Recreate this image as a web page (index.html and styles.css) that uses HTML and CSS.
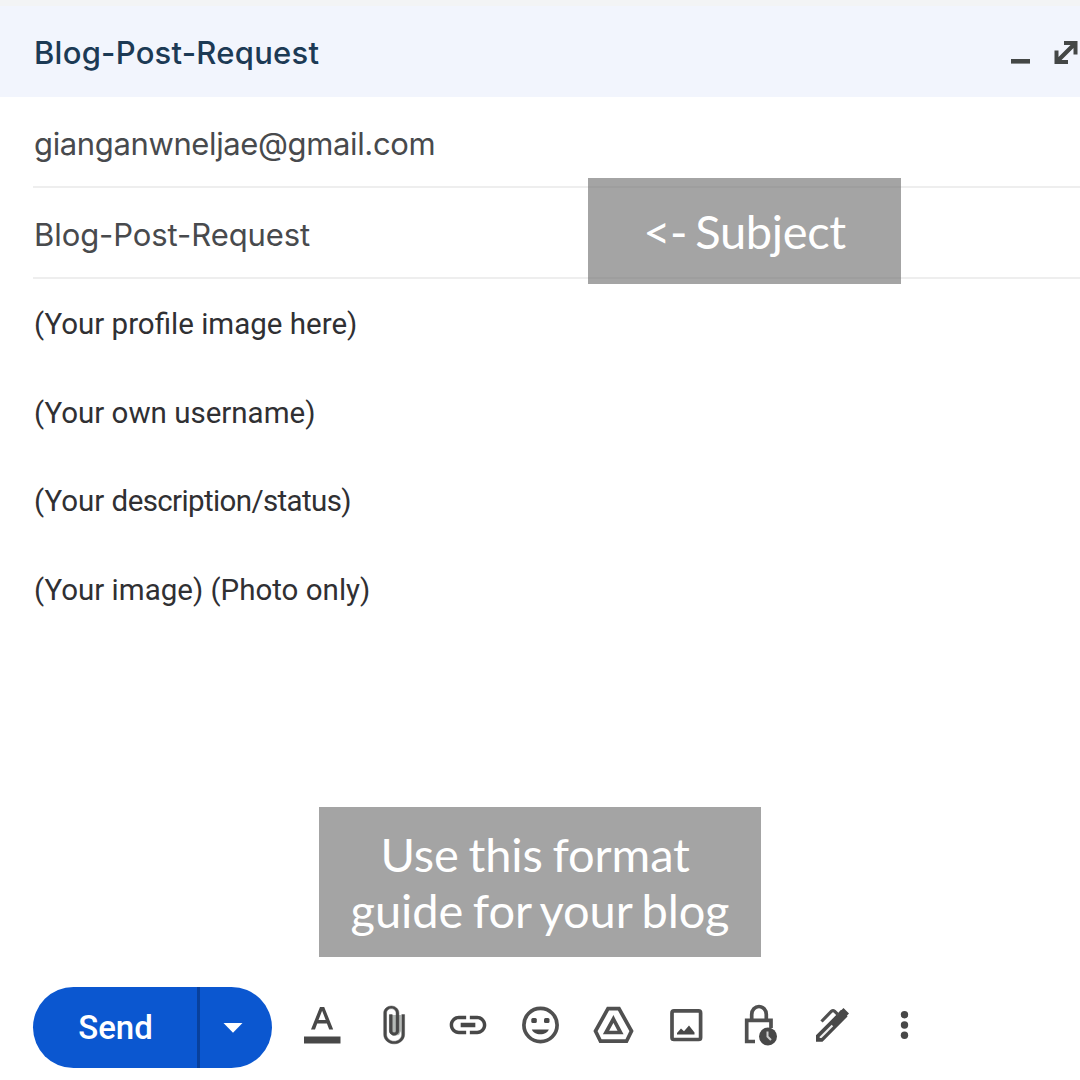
FILE: index.html
```
<!DOCTYPE html>
<html lang="en">
<head>
<meta charset="utf-8">
<title>Blog-Post-Request</title>
<link rel="stylesheet" href="styles.css">
</head>
<body>
<main class="compose">
  <header class="titlebar">
    <h1 class="title">Blog-Post-Request</h1>
    <svg class="window-icons" viewBox="0 0 80 44" width="80" height="44">
      <path d="M11 31h19v4.600H11z"/>
      <path d="M64 13h13.500v13.500h-4v-6.500L61.500 32H68v4H54.500V22.500h4v6.500L70.500 17H64z"/>
    </svg>
  </header>
  <div class="field recipient">gianganwneljae@gmail.com</div>
  <div class="field">Blog-Post-Request</div>
  <section class="message">
    <p>(Your profile image here)</p>
    <p>(Your own username)</p>
    <p>(Your <span class="tight">description/status)</span></p>
    <p>(Your image) (Photo only)</p>
  </section>
  <footer class="toolbar">
    <div class="send">
      <button class="send-main">Send</button>
      <button class="send-more" aria-label="More send options"><svg viewBox="0 0 20 10" width="20" height="10"><path d="M.5 0h19L10 9.700z"/></svg></button>
    </div>
    <div class="tools">
      <svg viewBox="0 0 44 44"><path d="M4 33.500h36.500v7H4z"/><path d="M11 26.500L20 4h4.200l9 22.500h-4l-2.300-6H17.200l-2.200 6zM18.500 17h7.200L22.100 7.800z"/></svg>
      <svg viewBox="0 0 44 44"><path class="tint" d="M16 12V29l4 4 6-1 2-4V12z"/><g transform="translate(-2.600 1.300) scale(1.900 1.720)"><path d="M16.500 6v11.500c0 2.210-1.790 4-4 4s-4-1.790-4-4V5c0-1.380 1.120-2.500 2.500-2.500s2.500 1.120 2.500 2.500v10.500c0 .55-.45 1-1 1s-1-.45-1-1V6H10v9.500c0 1.380 1.120 2.500 2.500 2.500s2.500-1.120 2.500-2.500V5c0-2.210-1.790-4-4-4S7 2.790 7 5v12.500c0 3.040 2.460 5.500 5.500 5.500s5.500-2.460 5.500-5.500V6z" stroke="#484848" stroke-width=".25"/></g></svg>
      <svg viewBox="0 0 24 24"><path d="M3.900 12c0-1.710 1.390-3.100 3.100-3.100h4V7H7c-2.760 0-5 2.240-5 5s2.240 5 5 5h4v-1.900H7c-1.710 0-3.100-1.390-3.100-3.100zM8 13.200h8v-2.400H8zM17 7h-4v1.900h4c1.710 0 3.100 1.390 3.100 3.100s-1.390 3.100-3.100 3.100h-4V17h4c2.760 0 5-2.240 5-5s-2.240-5-5-5z"/></svg>
      <svg viewBox="0 0 44 44"><circle class="line" cx="22.500" cy="22" r="16.600"/><rect x="13.300" y="15" width="5.500" height="5" rx="1.500"/><rect x="26" y="15" width="5.500" height="5" rx="1.500"/><path d="M13.800 26.500h17c-1 3-4.500 4.800-8.500 4.800s-7.500-1.800-8.500-4.800z"/></svg>
      <svg viewBox="0 0 44 44"><path class="line" d="M17 5.700h11L40.500 28 35.500 38.200H9.500L4.500 28z"/><path class="line" d="M22.400 16L29.500 29.500H15z"/></svg>
      <svg viewBox="0 0 44 44"><rect class="line" x="8" y="7.900" width="28.600" height="28.600" rx="2"/><path d="M13 31.500v-1.500l4-4.500 3 2.700 5-5.700 5.500 7v2z"/></svg>
      <svg viewBox="0 0 44 44"><path class="line" d="M14.700 16.500V11.500a7.300 8 0 0 1 14.600 0v5M18 38.500H9.700V17.300H34V25"/><circle cx="31" cy="33.500" r="9"/><path class="hand" d="M30.500 28.500v5l3.500 3.500"/></svg>
      <svg viewBox="0 0 44 44"><path d="M31.500 7l2-2 5.500 5.500-2 2 .5 1L12.500 38.700H6v-6.500l16-16 5.500-5.500 3-3.500z"/><path class="hollow" d="M9.700 35v-1.300L21.700 21.800l1.500 1.500L11.500 35z"/><path class="line thin" d="M11.500 18.500L21.500 8.200q1.500-1.200 3 0l4 4"/></svg>
      <svg viewBox="0 0 44 44"><circle cx="22.500" cy="11.700" r="3.700"/><circle cx="22.500" cy="22" r="3.700"/><circle cx="22.500" cy="32.200" r="3.700"/></svg>
    </div>
  </footer>
  <aside class="note note-subject">&lt;- Subject</aside>
  <aside class="note note-guide">Use this format 
guide for your blog</aside>
</main>
</body>
</html>
```
FILE: styles.css
```
* { box-sizing: border-box; }
body { margin: 0; background: #fff; }
.compose {
  position: relative;
  display: flex;
  flex-direction: column;
  width: 1080px;
  height: 1080px;
  overflow: hidden;
  font-family: Inter, "Liberation Sans", sans-serif;
}
.titlebar {
  display: flex;
  justify-content: space-between;
  align-items: flex-start;
  height: 97px;
  padding: 27px 0 0 34px;
  border-top: 6px solid #f3f4f5;
  background: #f2f5fd;
}
.title { margin: 0; font-size: 31px; font-weight: 500; line-height: 40px; letter-spacing: .25px; color: #1c3a55; }
.window-icons { margin-top: -5px; fill: #444746; }
.field {
  display: flex;
  align-items: center;
  height: 91px;
  margin-left: 33px;
  padding: 4px 0 0 1px;
  border-bottom: 2px solid #eeeeee;
  font-size: 31px;
  letter-spacing: -.08px;
  color: #484a4d;
}
.recipient { letter-spacing: -.37px; }
.message { flex: 1; padding: 23px 0 0 34px; color: #303033; font: 29.500px/44px Roboto, sans-serif; }
.message p { margin: 0 0 44.600px; }
.message .tight { letter-spacing: -.62px; }
.toolbar { display: flex; height: 93px; padding-left: 33px; }
.send { display: flex; width: 239px; height: 81px; border-radius: 41px; overflow: hidden; background: #0b57d0; }
.send button { border: 0; padding: 0; background: none; color: #fff; font: 500 33px/81px Roboto, sans-serif; }
.send .send-main { flex: 0 0 164px; padding-left: 1px; }
.send .send-more { flex: 1; display: flex; align-items: center; justify-content: center; border-left: 3px solid #08409c; padding-right: 6px; }
.send-more svg { fill: #fff; }
.tools { display: flex; gap: 28.800px; margin: 16px 0 0 28px; }
.tools svg { width: 44px; height: 44px; fill: #484848; }
.tools .line { fill: none; stroke: #505050; stroke-width: 3.700; }
.tools .thin { stroke-width: 3.200; }
.tools .tint { fill: #b4b9b6; }
.tools .hollow { fill: #eee; }
.tools .hand { fill: none; stroke: #ccc; stroke-width: 2; }
.note {
  position: absolute;
  background: rgba(115, 115, 115, .65);
  color: #fff;
  font-family: Lato, sans-serif;
  font-size: 47px;
  letter-spacing: -.1px;
  word-spacing: -2.200px;
  text-align: center;
  white-space: pre;
}
.note-subject { left: 588px; top: 178px; width: 313px; height: 106px; line-height: 106px; letter-spacing: -.350px; word-spacing: -3.500px; }
.note-guide { left: 319px; top: 807px; width: 442px; height: 150px; padding-top: 19px; line-height: 56px; }
```
